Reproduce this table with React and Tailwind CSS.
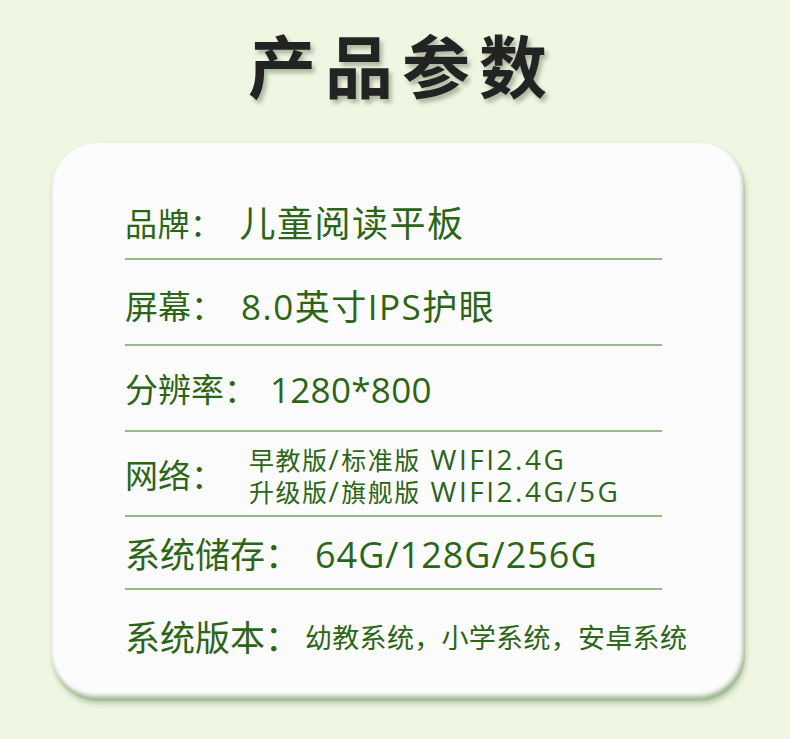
export default function App() {
  const cjk = { fontFamily: '"Open Sans", "Noto Sans CJK SC", sans-serif' };
  const line = "border-b-2 border-[#98b988]";
  return (
    <div className="w-[790px] h-[739px] bg-[#eff7e2] flex flex-col overflow-hidden" style={cjk}>
      <div className="h-[131px] flex items-start justify-center pt-[22px] pl-[14px]">
        <h1
          className="text-[68px] leading-[84px] font-bold text-[#232323] tracking-[9px] [text-shadow:3px_4px_4px_rgba(70,90,60,0.4)]"
          style={{ fontFamily: '"Noto Sans CJK SC", sans-serif' }}
        >
          产品参数
        </h1>
      </div>
      <div className="ml-[52px] mt-[12px] w-[693px] h-[558px] bg-[#fdfcfd] rounded-[46px] shadow-[inset_-2px_-5px_4px_rgba(100,140,80,0.6),1px_3px_5px_rgba(90,130,70,0.35)] pl-[73px] pt-[46px] whitespace-nowrap">
        <div className="w-[537px] flex flex-col text-[#2b6516]">
          <div className={`h-[71px] flex items-center ${line}`}>
            <span className="text-[32px] leading-none tracking-[0.5px]">品牌：</span>
            <span className="text-[36px] leading-none ml-[17px] tracking-[1.5px]">儿童阅读平板</span>
          </div>
          <div className={`h-[86px] pt-[9px] flex items-center ${line}`}>
            <span className="text-[33px] leading-none">屏幕：</span>
            <span className="text-[35px] leading-none ml-[17px] tracking-[1.5px]">8.0英寸IPS护眼</span>
          </div>
          <div className={`h-[86px] pt-[3px] flex items-center ${line}`}>
            <span className="text-[33px] leading-none">分辨率：</span>
            <span className="text-[35px] leading-none ml-[13px] tracking-[0.3px]">1280*800</span>
          </div>
          <div className={`h-[85px] pt-[4px] flex items-center ${line}`}>
            <span className="text-[33px] leading-none">网络：</span>
            <div className="ml-[25px] flex flex-col text-[25px] tracking-[1.5px]">
              <div className="h-[32px] leading-[32px]">
                早教版<span className="inline-block leading-[28px] text-[28px] tracking-[2.5px]">/</span>标准版<span className="inline-block leading-[28px] text-[28px] tracking-[2.5px]">&nbsp;WIFI2.4G</span>
              </div>
              <div className="h-[32px] leading-[32px]">
                升级版<span className="inline-block leading-[28px] text-[28px] tracking-[2.5px]">/</span>旗舰版<span className="inline-block leading-[28px] text-[28px] tracking-[2.5px]">&nbsp;WIFI2.4G/5G</span>
              </div>
            </div>
          </div>
          <div className={`h-[73px] pt-[4px] flex items-center ${line}`}>
            <span className="text-[35px] leading-none">系统储存：</span>
            <span className="text-[36px] leading-none ml-[15px] tracking-[1px]">64G/128G/256G</span>
          </div>
          <div className="h-[94px] flex items-center">
            <span className="text-[35px] leading-none shrink-0">系统版本：</span>
            <span className="text-[27px] leading-none ml-[5px] shrink-0 tracking-[0.3px]">幼教系统，小学系统，安卓系统</span>
          </div>
        </div>
      </div>
    </div>
  );
}
